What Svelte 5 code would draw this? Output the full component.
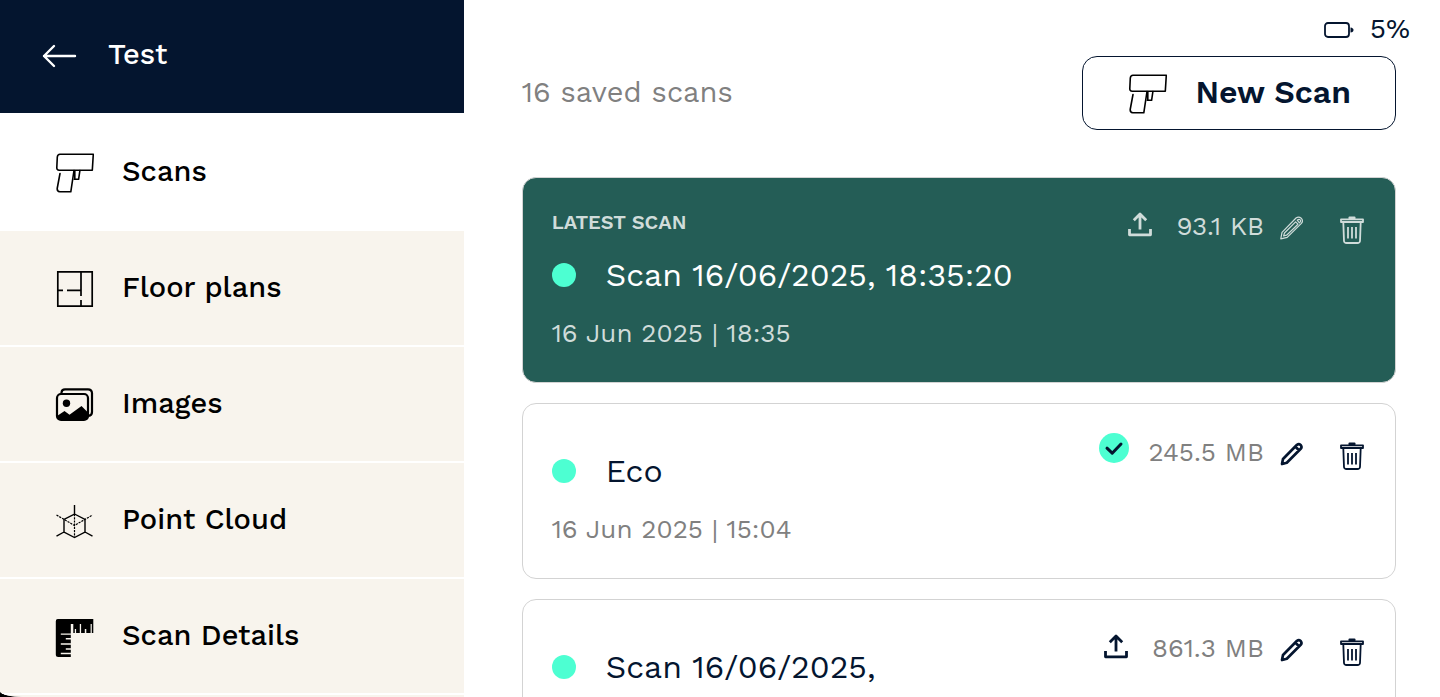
<script>
    let active = $state("Scans");

    const sections = [
        { name: "Scans", icon: "scanner" },
        { name: "Floor plans", icon: "floor" },
        { name: "Images", icon: "images" },
        { name: "Point Cloud", icon: "cloud" },
        { name: "Scan Details", icon: "ruler" },
    ];

    const scans = [
        {
            name: "Scan 16/06/2025, 18:35:20",
            date: "16 Jun 2025 | 18:35",
            size: "93.1 KB",
            uploaded: false,
            latest: true,
        },
        {
            name: "Eco",
            date: "16 Jun 2025 | 15:04",
            size: "245.5 MB",
            uploaded: true,
        },
        {
            name: "Scan 16/06/2025,",
            size: "861.3 MB",
            uploaded: false,
        },
    ];
</script>

{#snippet icon(name)}
    <svg class="icon" viewBox="0 0 40 40" aria-hidden="true">
        {#if name === "scanner"}
            <g fill="none" stroke="currentColor" stroke-width="1.6" stroke-linejoin="round" stroke-linecap="round">
                <path d="M6 1.2H39.3L38.3 17.2H5.2Q2.6 17 2.8 14.5L3.3 4Q3.6 1.3 6 1.2Z" />
                <path d="M6 20.5 3.2 35.5Q3 38.4 5.8 38.8H16.8L20 17.5" />
                <path d="M20.2 26.3H24.6L25.9 17.5M20.8 18V26" />
            </g>
        {:else if name === "floor"}
            <path
                d="M3.8 2.8H38.2V37.2H3.8ZM27 3V27M27 31V37M4 21.3H9M13 21.3H27"
                fill="none"
                stroke="currentColor"
                stroke-width="1.7"
            />
        {:else if name === "images"}
            <path
                d="M7.5 9V7.5Q7.8 4.3 11 4.3H34Q37.8 4.3 38 8V27Q38 30.5 34.5 30.8"
                fill="none"
                stroke="currentColor"
                stroke-width="2.2"
            />
            <rect x="3" y="9" width="31" height="26" rx="4" fill="none" stroke="currentColor" stroke-width="2.2" />
            <circle cx="12.5" cy="18.2" r="3.7" fill="currentColor" />
            <path
                d="M3 31 10.5 26 15.5 29.8 27.5 21 34 27.5V32Q34 35 30.5 35H6.5Q3 35 3 31Z"
                fill="currentColor"
            />
        {:else if name === "cloud"}
            <g fill="none" stroke="currentColor" stroke-width="1.4">
                <path d="M20.5 4V13L10 18.5V31L20.5 36.5 31 31V18.5L20.5 13M10 31 2.5 35.2M31 31 38.5 35.2" />
                <path d="M2.5 14 20.5 24.5 38.5 14M20.5 13V36" stroke-width="1.2" stroke-dasharray="2.2 1" />
            </g>
        {:else}
            <path
                d="M3.8 2H39.3V16H37.8V7H36.6V16H32.3V12H30.8V16H27.1V7H25.8V16H22.1V12H20.8V16H19.3V7H16.8V16.5H6.8V17.8H16.8V21H11.8V22.5H16.8V26.2H6.8V27.8H16.8V31.3H11.8V32.8H16.8V35.8H6.8V37.2H16.8V40H4.3Q1.8 40 1.8 37.5V4.2Q1.8 2 3.8 2Z"
                fill="currentColor"
            />
        {/if}
    </svg>
{/snippet}

<div class="screen">
    <aside>
        <header class="project">
            <button type="button" class="back" aria-label="Back">
                <svg viewBox="0 0 36 26" aria-hidden="true">
                    <path
                        d="M12 3 2 13 12 23M2 13H33"
                        fill="none"
                        stroke="currentColor"
                        stroke-width="2.4"
                        stroke-linecap="round"
                        stroke-linejoin="round"
                    />
                </svg>
            </button>
            <h1>Test</h1>
        </header>
        <nav>
            {#each sections as section}
                <a
                    href="#{section.icon}"
                    class:active={active === section.name}
                    aria-current={active === section.name ? "page" : undefined}
                    onclick={() => (active = section.name)}
                >
                    {@render icon(section.icon)}
                    <span>{section.name}</span>
                </a>
            {/each}
        </nav>
    </aside>

    <main>
        <div class="status">
            <svg viewBox="0 0 30 16" aria-hidden="true">
                <rect x="1" y="1" width="24" height="14" rx="3" fill="none" stroke="currentColor" stroke-width="1.8" />
                <path d="M26.5 5.5Q29.5 6 29.5 8T26.5 10.5Z" fill="currentColor" />
            </svg>
            <span>5%</span>
        </div>

        <div class="toolbar">
            <p>16 saved scans</p>
            <button type="button" class="new-scan">
                {@render icon("scanner")}
                <span>New Scan</span>
            </button>
        </div>

        <ul>
            {#each scans as scan}
                <li class="card" class:latest={scan.latest}>
                    <div class="info">
                        {#if scan.latest}
                            <p class="label">LATEST SCAN</p>
                        {/if}
                        <h2><span class="dot"></span>{scan.name}</h2>
                        {#if scan.date}
                            <p class="date">{scan.date}</p>
                        {/if}
                    </div>
                    <div class="actions">
                        {#if scan.uploaded}
                            <svg class="done" viewBox="0 0 30 38" role="img" aria-label="Uploaded">
                                <circle cx="15" cy="15" r="15" fill="#4dffd2" />
                                <path
                                    d="M8 15.2 13.2 20.2 22 11"
                                    fill="none"
                                    stroke="#04152f"
                                    stroke-width="3"
                                    stroke-linecap="round"
                                    stroke-linejoin="round"
                                />
                            </svg>
                        {:else}
                            <button type="button" class="upload" aria-label="Upload">
                                <svg viewBox="0 0 24 28" aria-hidden="true">
                                    <path
                                        d="M12 17.5V2.2M5.8 8.2 12 2 18.2 8.2M1.5 17V22.8H22.5V17"
                                        fill="none"
                                        stroke="currentColor"
                                        stroke-width="2.8"
                                        stroke-linejoin="round"
                                    />
                                </svg>
                            </button>
                        {/if}
                        <span class="size">{scan.size}</span>
                        <button type="button" class="edit" aria-label="Edit name">
                            <svg viewBox="0 0 24 24" aria-hidden="true">
                                {#if scan.latest}
                                    <g fill="none" stroke="currentColor" stroke-width="1.2" stroke-linejoin="round">
                                        <path d="M.8 22.8 2 16.3 16 2Q18.7 0 21.2 2.2 23.6 4.8 21.4 7.4L7.2 21.4Z" />
                                        <path d="M3.6 20 4.5 17 15.6 5.8 18 8.2 6.6 19.2ZM17.2 4.2Q19 2.6 20.2 3.8T19.4 6.8Z" />
                                    </g>
                                {:else}
                                    <path
                                        d="M2 22 3 17 17 2.8Q18.8 1.5 20.7 3 22.3 5 20.7 6.8L6.8 20.7ZM15.5 4.8 18.7 8"
                                        fill="none"
                                        stroke="currentColor"
                                        stroke-width="2.7"
                                        stroke-linejoin="round"
                                    />
                                    <path d="M1 23 2 19 5 22Z" fill="currentColor" />
                                {/if}
                            </svg>
                        </button>
                        <button type="button" class="delete" aria-label="Delete">
                            <svg viewBox="0 0 24 28" aria-hidden="true">
                                <g fill="none" stroke="currentColor" stroke-width="1.8" stroke-linejoin="round">
                                    <path d="M1 3.3H23V6H1ZM3.3 6.2 4 25Q4.2 27 6.5 27H17.5Q19.8 27 20 25L20.7 6.2" />
                                    <path d="M8 11V22.5M12 11V22.5M16 11V22.5" />
                                </g>
                                <rect x="8.5" y="0.5" width="7" height="3" rx="1" fill="currentColor" />
                            </svg>
                        </button>
                    </div>
                </li>
            {/each}
        </ul>
    </main>
</div>

<style>
    :global(body) {
        background: #000;
    }

    .screen {
        display: flex;
        height: 100vh;
        overflow: hidden;
        background: #fff;
        border-bottom-left-radius: 24px 6px;
        color: #04152f;
        font-family: "Work Sans", Inter, sans-serif;
    }

    h1,
    h2,
    p,
    ul {
        margin: 0;
        padding: 0;
        font-weight: 400;
    }

    button {
        padding: 0;
        border: 0;
        background: none;
        color: inherit;
        font: inherit;
        cursor: pointer;
    }

    svg {
        display: block;
        flex: none;
    }

    .icon {
        width: 40px;
        height: 40px;
    }

    aside {
        flex: none;
        width: 32.2%;
        background: #f8f4ed;
    }

    .project {
        display: flex;
        align-items: center;
        gap: 30px;
        box-sizing: border-box;
        height: 115px;
        padding: 0 42px 6px;
        border-bottom: 2px solid #fff;
        background: #04152f;
        color: #fff;
    }

    .back svg {
        width: 36px;
        height: 26px;
        padding-top: 4px;
    }

    .project h1 {
        font-size: 29px;
        font-weight: 500;
    }

    nav a {
        display: flex;
        align-items: center;
        gap: 28px;
        box-sizing: border-box;
        height: 116px;
        padding: 0 0 2px 54px;
        border-bottom: 2px solid #fff;
        color: #000;
        font-size: 29px;
        font-weight: 500;
        text-decoration: none;
    }

    nav .icon {
        padding-top: 4px;
    }

    nav a.active {
        background: #fff;
    }

    main {
        flex: 1;
        padding: 0 44px 0 58px;
    }

    .status {
        display: flex;
        align-items: center;
        justify-content: flex-end;
        gap: 16px;
        height: 56px;
        margin-right: -14px;
        font-size: 28px;
    }

    .status svg {
        width: 30px;
        height: 16px;
        padding-top: 4px;
    }

    .toolbar {
        display: flex;
        align-items: center;
        justify-content: space-between;
        margin-bottom: 47px;
    }

    .toolbar p {
        padding-bottom: 2px;
        color: #808080;
        font-size: 29px;
    }

    .new-scan {
        display: flex;
        align-items: center;
        gap: 28px;
        height: 74px;
        padding: 0 44px 2px;
        border: 1px solid #04152f;
        border-radius: 15px;
        font-size: 32px;
        font-weight: 600;
    }

    .new-scan .icon {
        padding-top: 4px;
        color: #000;
    }

    ul {
        display: grid;
        gap: 20px;
        list-style: none;
    }

    .card {
        display: flex;
        align-items: flex-start;
        justify-content: space-between;
        padding: 29px 31px 33px 29px;
        border: 1px solid #d3d3d3;
        border-radius: 14px;
    }

    .label {
        font-size: 20px;
        font-weight: 600;
        line-height: 30px;
    }

    h2 {
        display: flex;
        align-items: center;
        gap: 30px;
        margin-top: 18px;
        font-size: 32px;
        line-height: 40px;
    }

    .dot {
        width: 24px;
        height: 24px;
        border-radius: 50%;
        background: #4dffd2;
    }

    .date {
        margin-top: 22px;
        font-size: 26px;
        line-height: 32px;
    }

    .date,
    .size {
        color: #808080;
    }

    .size {
        margin: 0 16px 0 24px;
        font-size: 26px;
    }

    .actions {
        display: flex;
        align-items: center;
        height: 38px;
    }

    .upload svg {
        width: 24px;
        height: 28px;
    }

    .done {
        width: 30px;
        height: 38px;
    }

    .done + .size {
        margin-left: 20px;
    }

    .edit svg {
        width: 24px;
        height: 24px;
        padding-top: 4px;
    }

    .delete {
        margin-left: 36px;
    }

    .delete svg {
        width: 24px;
        height: 28px;
        padding-top: 8px;
    }

    .latest {
        background: #245d56;
        color: #fff;
    }

    .latest .label,
    .latest .date,
    .latest .size,
    .latest button {
        color: #d0dcda;
    }
</style>
